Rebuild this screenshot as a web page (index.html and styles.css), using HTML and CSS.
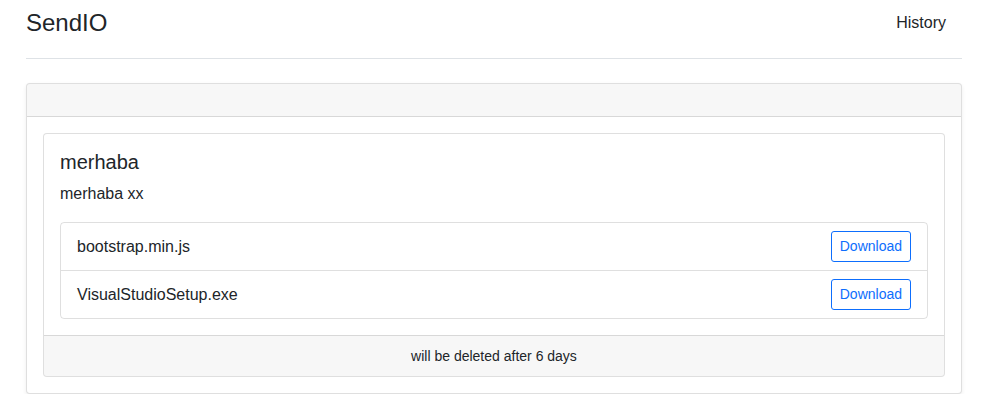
FILE: index.html
```html
<!DOCTYPE html>
<html lang="en">
<head>
<meta charset="utf-8">
<title>SendIO</title>
<link rel="stylesheet" href="styles.css">
</head>
<body>
<div class="container">
  <header class="header">
    <a class="brand" href="#">SendIO</a>
    <nav class="nav"><a class="nav-link" href="#">History</a></nav>
  </header>
  <div class="card outer">
    <div class="card-header"></div>
    <div class="card-body">
      <div class="card inner">
        <div class="card-body">
          <h5 class="card-title">merhaba</h5>
          <p class="card-text">merhaba xx</p>
          <ul class="list-group">
            <li class="list-item"><span>bootstrap.min.js</span><a class="btn" href="#">Download</a></li>
            <li class="list-item"><span>VisualStudioSetup.exe</span><a class="btn" href="#">Download</a></li>
          </ul>
        </div>
        <div class="card-footer">will be deleted after 6 days</div>
      </div>
    </div>
  </div>
</div>
</body>
</html>
```
FILE: styles.css
```css
* { box-sizing: border-box; }
body {
  margin: 0;
  font-family: "Liberation Sans", Arial, sans-serif;
  font-size: 16px;
  line-height: 1.5;
  color: #212529;
  background: #fff;
}
a { text-decoration: none; }
.container {
  width: 936px;
  margin-left: 26px;
}
.header {
  display: flex;
  align-items: center;
  justify-content: space-between;
  padding: 3px 0 15px;
  border-bottom: 1px solid #dee2e6;
  margin-bottom: 24px;
}
.brand {
  font-size: 24px;
  line-height: 36px;
  color: #212529;
}
.nav-link {
  display: block;
  padding: 8px 16px;
  line-height: 24px;
  color: #212529;
}
.card {
  background: #fff;
  border: 1px solid rgba(0,0,0,.125);
  border-radius: 4px;
}
.outer {
  box-shadow: 0 2px 4px rgba(0,0,0,.075);
}
.card-header {
  height: 33px;
  background: rgba(0,0,0,.03);
  border-bottom: 1px solid rgba(0,0,0,.125);
  border-radius: 3px 3px 0 0;
}
.card-body {
  padding: 16px;
}
.card-title {
  margin: 0 0 8px;
  font-size: 20px;
  font-weight: 500;
  line-height: 1.2;
}
.card-text {
  margin: 0 0 16px;
}
.list-group {
  list-style: none;
  margin: 0;
  padding: 0;
  border: 1px solid rgba(0,0,0,.125);
  border-radius: 4px;
}
.list-item {
  display: flex;
  align-items: center;
  justify-content: space-between;
  padding: 8px 16px;
}
.list-item + .list-item {
  border-top: 1px solid rgba(0,0,0,.125);
}
.btn {
  display: inline-block;
  padding: 4px 8px;
  font-size: 14px;
  line-height: 21px;
  color: #0d6efd;
  border: 1px solid #0d6efd;
  border-radius: 3px;
}
.card-footer {
  padding: 8px 16px;
  text-align: center;
  font-size: 14px;
  line-height: 24px;
  background: rgba(0,0,0,.03);
  border-top: 1px solid rgba(0,0,0,.125);
  border-radius: 0 0 3px 3px;
}
```
